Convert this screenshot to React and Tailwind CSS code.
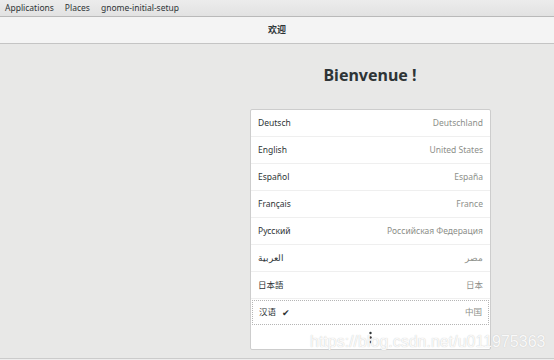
import React from "react";

const rows = [
  ["Deutsch", "Deutschland"],
  ["English", "United States"],
  ["Español", "España"],
  ["Français", "France"],
  ["Русский", "Российская Федерация"],
  ["العربية", "مصر"],
  ["日本語", "日本"],
];

export default function App() {
  return (
    <div
      className="relative w-[554px] h-[360px] overflow-hidden bg-[#e8e8e7] flex flex-col"
      style={{ fontFamily: '"Noto Sans", "Noto Sans CJK SC", sans-serif' }}
    >
      <div className="h-[17px] shrink-0 bg-gradient-to-b from-[#ececec] to-[#e2e2e2] border-b border-[#b9b9b9] flex items-center gap-[11px] pl-[5px] text-[8.5px] text-[#2e3436]">
        <span>Applications</span>
        <span>Places</span>
        <span>gnome-initial-setup</span>
      </div>
      <div className="h-[27px] shrink-0 bg-[#f4f4f4] border-b border-[#c4c4c4] flex items-center">
        <div className="w-[740px] text-center text-[9px] font-bold text-[#2e3436]">欢迎</div>
      </div>
      <div className="flex-1 flex flex-col pl-[250px]">
        <div className="w-[240px] h-[65px] flex items-center justify-center text-[16px] font-bold text-[#2e3436] pb-[3px]">
          Bienvenue !
        </div>
        <div className="w-[241px] h-[241px] bg-white border border-[#cdcdcd] rounded-[2px] flex flex-col">
          {rows.map(([a, b]) => (
            <div
              key={a}
              className="h-[27px] shrink-0 border-b border-[#efefef] flex items-center justify-between px-[7px] text-[8.5px]"
            >
              <span className="text-[#2e3436]">{a}</span>
              <span className="text-[#8d8f8a]">{b}</span>
            </div>
          ))}
          <div className="h-[27px] shrink-0 px-[1px] py-[1px] flex">
            <div className="flex-1 border border-dotted border-[#b5b5b5] flex items-center justify-between px-[6px] text-[8.5px]">
              <span className="text-[#2e3436] flex items-center gap-[6px]">
                汉语
                <span className="text-[9px]">✔</span>
              </span>
              <span className="text-[#8d8f8a]">中国</span>
            </div>
          </div>
          <div className="flex-1 flex items-center justify-center">
            <svg width="3" height="13" viewBox="0 0 3 13">
              <circle cx="1.5" cy="2" r="1.2" fill="#2e3436" />
              <circle cx="1.5" cy="6.5" r="1.2" fill="#2e3436" />
              <circle cx="1.5" cy="11" r="1.2" fill="#2e3436" />
            </svg>
          </div>
        </div>
      </div>
      <div className="h-[2px] shrink-0 border-t border-[#cbcbcb] bg-[#ededed]" />
      <div
        className="absolute left-[310px] top-[330px] text-[16px] text-white/90 whitespace-nowrap [text-shadow:0_0_1px_#bbbbbb]"
        style={{ fontFamily: '"Liberation Sans", sans-serif' }}
      >
        https://blog.csdn.net/u011975363
      </div>
    </div>
  );
}
